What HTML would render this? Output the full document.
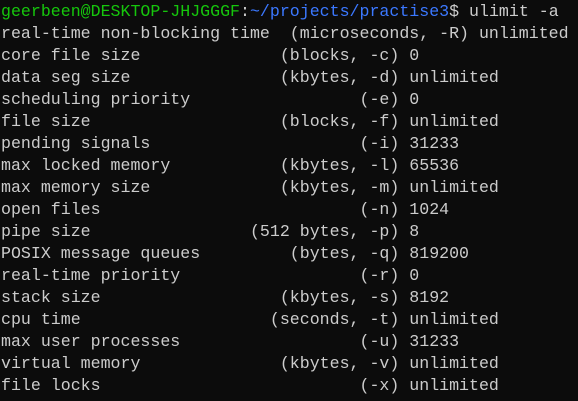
<!DOCTYPE html><html><head><style>
html,body{margin:0;background:#0c0c0c;width:578px;height:401px;overflow:hidden}
pre{margin:0;padding:1px 0 0 1px;font-family:"Liberation Mono","DejaVu Sans Mono",monospace;font-size:16.6px;line-height:22px;color:#cccccc}
.g{color:#16c60c}.b{color:#3b78ff}
</style></head><body><pre><span class="g">geerbeen@DESKTOP-JHJGGGF</span>:<span class="b">~/projects/practise3</span>$ ulimit -a
real-time non-blocking time  (microseconds, -R) unlimited
core file size              (blocks, -c) 0
data seg size               (kbytes, -d) unlimited
scheduling priority                 (-e) 0
file size                   (blocks, -f) unlimited
pending signals                     (-i) 31233
max locked memory           (kbytes, -l) 65536
max memory size             (kbytes, -m) unlimited
open files                          (-n) 1024
pipe size                (512 bytes, -p) 8
POSIX message queues         (bytes, -q) 819200
real-time priority                  (-r) 0
stack size                  (kbytes, -s) 8192
cpu time                   (seconds, -t) unlimited
max user processes                  (-u) 31233
virtual memory              (kbytes, -v) unlimited
file locks                          (-x) unlimited</pre></body></html>
